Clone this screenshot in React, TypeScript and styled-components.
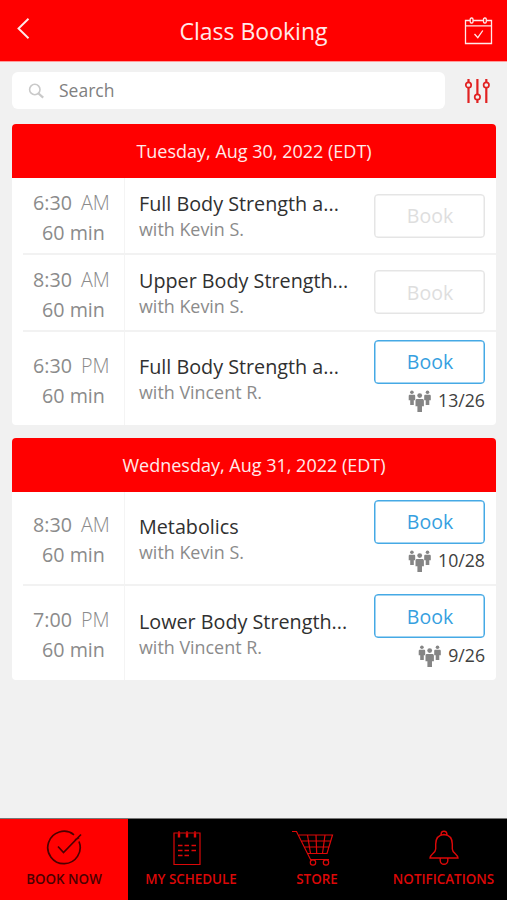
import React from "react";
import styled, { createGlobalStyle } from "styled-components";

const GlobalStyle = createGlobalStyle`
  * { box-sizing: border-box; }
  body {
    margin: 0;
    background: #f1f1f1;
    font-family: "Open Sans", "Noto Sans", sans-serif;
  }
`;

const Screen = styled.div`
  display: flex;
  flex-direction: column;
  width: 507px;
  height: 900px;
  overflow: hidden;
  background: #f1f1f1;
`;

const Header = styled.header`
  display: grid;
  grid-template-columns: 60px 1fr 60px;
  height: 62px;
  flex: none;
  background: #ff0000;
  border-bottom: 1px solid #ff9c9c;
  color: #ffe9e9;
`;

const BackButton = styled.button`
  display: flex;
  padding: 17px 0 0 16px;
  border: 0;
  background: none;
  color: inherit;
`;

const Title = styled.h1`
  margin: 0;
  font-size: 23px;
  line-height: 62px;
  font-weight: 400;
  text-align: center;
  white-space: nowrap;
`;

const CalendarButton = styled(BackButton)`
  padding: 16px 0 0 17px;
`;

const SearchRow = styled.div`
  display: flex;
  flex: none;
  height: 62px;
  padding: 10px 0 0 12px;
`;

const SearchField = styled.label`
  display: flex;
  width: 433px;
  height: 37px;
  border-radius: 6px;
  background: #fff;
`;

const SearchIcon = styled.svg`
  flex: none;
  margin: 11px 0 0 16px;
`;

const SearchInput = styled.input`
  width: 300px;
  height: 36px;
  margin-left: 14px;
  padding: 0;
  border: 0;
  outline: 0;
  background: none;
  font: 400 17.5px "Open Sans", sans-serif;
  color: #777;
  &::placeholder { color: #808080; opacity: 1; }
`;

const FilterButton = styled.button`
  display: flex;
  margin-left: 19px;
  padding: 6px 0 0;
  border: 0;
  background: none;
`;

const DayList = styled.main`
  display: flex;
  flex-direction: column;
  flex: 1;
  gap: 13px;
  padding: 0 11px 0 12px;
`;

const DayCard = styled.section`
  overflow: hidden;
  border-radius: 4px;
  background: #fff;
`;

const DayTitle = styled.h2`
  height: 54px;
  margin: 0;
  background: #ff0000;
  color: #ffeaea;
  font-size: 18px;
  font-weight: 400;
  line-height: 54px;
  text-align: center;
`;

const TimeCell = styled.div`
  display: flex;
  flex-direction: column;
  justify-content: center;
  padding: 4px 0 0 21px;
  border-right: 1px solid #f4f4f4;
  color: #8b8b8b;
  font-size: 19.7px;
  line-height: 30px;
  white-space: nowrap;
`;

const Meridiem = styled.span`
  margin-left: 9px;
  font-weight: 300;
`;

const Duration = styled.div`
  padding-left: 9px;
`;

const InfoCell = styled.div`
  display: flex;
  flex-direction: column;
  justify-content: center;
  padding: 2px 0 0 14px;
  white-space: nowrap;
`;

const ClassName = styled.div`
  color: #303030;
  font-size: 19.75px;
  line-height: 26px;
`;

const Instructor = styled.div`
  color: #8b8b8b;
  font-size: 17.9px;
  line-height: 25px;
`;

const ActionCell = styled.div`
  display: flex;
  flex-direction: column;
  justify-content: center;
  padding-right: 11px;
`;

const ClassRow = styled.article<{ $height: number; $divided: boolean }>`
  display: grid;
  grid-template-columns: 113px 1fr 122px;
  height: ${(p) => p.$height}px;
  ${(p) => p.$divided && `
    > * { border-top: 2px solid #f2f2f2; }
    > :first-child { margin-left: 11px; padding-left: 10px; }
    > :last-child { padding-bottom: 1px; }
  `}
`;

const BookButton = styled.button`
  height: 44px;
  padding: 0 0 0 1px;
  border: 1.5px solid #45a9e5;
  border-radius: 4px;
  box-shadow: inset 0 0 0 0.5px #45a9e5;
  background: #fff;
  color: #369fdf;
  font: 400 19.5px "Open Sans", sans-serif;
  &:disabled { border-color: #e5e5e5; box-shadow: inset 0 0 0 0.5px #e5e5e5; color: #dedede; }
`;

const Capacity = styled.div`
  display: flex;
  justify-content: flex-end;
  align-items: center;
  gap: 7px;
  height: 33px;
  color: #404040;
  font-size: 17.7px;
`;

const PeopleIcon = styled.svg`
  margin-top: 3px;
`;

const Nav = styled.nav`
  display: grid;
  grid-template-columns: 128px 126px 126px 127px;
  flex: none;
  height: 82px;
  background: #000;
  border-top: 1px solid #777;
`;

const NavItem = styled.button<{ $active?: boolean }>`
  display: flex;
  flex-direction: column;
  align-items: center;
  padding: 11px 0 0;
  border: 0;
  background: ${(p) => (p.$active ? "#ff0000" : "#000")};
  color: ${(p) => (p.$active ? "#4b0000" : "#dc0808")};
  font: 600 13.4px/18px "Open Sans", sans-serif;
  white-space: nowrap;
`;

const NavLabel = styled.span`
  margin-top: 4px;
`;

const OffsetIcon = styled.svg`
  margin-right: 8px;
`;

const People = () => (
  <PeopleIcon width="23" height="23" viewBox="0 0 23 23" fill="#858585">
    <circle cx="3.9" cy="2.2" r="1.8" />
    <path d="M2 4.8h3.8c1 0 1.4.5 1.4 1.3v4.1H5.8V15H2.2v-4.8H.7V6.1c0-.8.4-1.3 1.3-1.3z" />
    <circle cx="19.5" cy="2.2" r="1.8" />
    <path d="M17.6 4.8h3.8c1 0 1.4.5 1.4 1.3v4.1h-1.5V15h-3.6v-4.8h-1.5V6.1c0-.8.4-1.3 1.4-1.3z" />
    <circle cx="11.7" cy="5.6" r="2.4" />
    <path d="M9.3 9h4.8c1.2 0 1.8.6 1.8 1.7v5.6H14V22H9.4v-5.7H7.5v-5.6C7.5 9.6 8.1 9 9.3 9z" />
  </PeopleIcon>
);

const CheckIcon = () => (
  <svg width="36" height="36" viewBox="0 0 36 36" fill="none" stroke="currentColor" strokeWidth="1.7">
    <path d="M28 4.8A16.2 16.2 0 1 0 33 11.5M12 16.5l5.5 6L35 4.5M29 10l4-2.5" />
  </svg>
);

const ScheduleIcon = () => (
  <OffsetIcon width="36" height="36" viewBox="0 0 36 36" fill="none" stroke="currentColor" strokeWidth="1.2">
    <path d="M5 3h26v31.5H5zM10 1v6M18 1v6M26 1v6" />
    <path d="M8.8 3.5h2.4v4H8.8zm8 0h2.4v4h-2.4zm8 0h2.4v4h-2.4z" fill="currentColor" stroke="none" />
    <path d="M9 15.5h4.5m2 0H20m2.5 0H27M9 20.5h4.5m2 0H20m2.5 0H27M9 25.5h4.5m2 0H20" strokeWidth="1.6" />
  </OffsetIcon>
);

const StoreIcon = () => (
  <OffsetIcon width="42" height="36" viewBox="0 0 42 36" fill="none" stroke="currentColor" strokeWidth="1.2">
    <path d="M0 1.5h4.5L18.5 29.5H37M7 5h33.5l-5.5 18.5H15.5M9.8 11h29M12.8 17h24.1M15.5 5l3 18.5M24 5l.7 18.5M33 5l-2.5 18.5" />
    <circle cx="21" cy="32.5" r="2.7" />
    <circle cx="34" cy="32.5" r="2.7" />
  </OffsetIcon>
);

const BellIcon = () => (
  <svg width="36" height="36" viewBox="0 0 36 36" fill="none" stroke="currentColor" strokeWidth="1.4">
    <path d="M15 5c0-5 6-5 6 0M18 4.5c-5.5.5-8.3 4-8.3 9.5v5c0 4-5.7 5.5-5.7 9h28c0-3.5-5.7-5-5.7-9v-5c0-5.5-2.8-9-8.3-9.5zM14.2 28v2.5a3.8 3.8 0 0 0 7.6 0V28" />
  </svg>
);

interface ClassItem {
  time: string;
  meridiem: string;
  name: string;
  instructor: string;
  capacity?: string;
  height: number;
}

const days: { title: string; classes: ClassItem[] }[] = [
  {
    title: "Tuesday, Aug 30, 2022 (EDT)",
    classes: [
      { time: "6:30", meridiem: "AM", name: "Full Body Strength a...", instructor: "Kevin S.", height: 75 },
      { time: "8:30", meridiem: "AM", name: "Upper Body Strength...", instructor: "Kevin S.", height: 77 },
      { time: "6:30", meridiem: "PM", name: "Full Body Strength a...", instructor: "Vincent R.", capacity: "13/26", height: 95 },
    ],
  },
  {
    title: "Wednesday, Aug 31, 2022 (EDT)",
    classes: [
      { time: "8:30", meridiem: "AM", name: "Metabolics", instructor: "Kevin S.", capacity: "10/28", height: 92 },
      { time: "7:00", meridiem: "PM", name: "Lower Body Strength...", instructor: "Vincent R.", capacity: "9/26", height: 96 },
    ],
  },
];

export default function App() {
  return (
    <>
      <GlobalStyle />
      <Screen>
        <Header>
          <BackButton aria-label="Back">
            <svg width="14" height="23" viewBox="0 0 14 23" fill="none" stroke="currentColor" strokeWidth="1.9">
              <path d="M12.5 1.7L2.5 11.5l10 9.8" />
            </svg>
          </BackButton>
          <Title>Class Booking</Title>
          <CalendarButton aria-label="Calendar">
            <svg width="30" height="30" viewBox="0 0 30 30" fill="none" stroke="currentColor" strokeWidth="1.3">
              <path d="M6 4.5H1.5v23h26v-23H23M9 4.5h10M1.5 9.8h26M10.5 18l3.3 3.7 5-7.2" />
              <rect x="6.2" y="2" width="2.8" height="5" rx="1.2" />
              <rect x="19.5" y="2" width="2.8" height="5" rx="1.2" />
            </svg>
          </CalendarButton>
        </Header>
        <SearchRow>
          <SearchField>
            <SearchIcon width="17" height="17" viewBox="0 0 17 17" fill="none" stroke="#c9c9c9">
              <circle cx="6.8" cy="6.5" r="5.2" strokeWidth="1.6" />
              <path d="M10.5 10.5l4.7 4.2" strokeWidth="2.3" />
            </SearchIcon>
            <SearchInput placeholder="Search" />
          </SearchField>
          <FilterButton aria-label="Filters">
            <svg width="27" height="27" viewBox="0 0 27 27" fill="none" stroke="#e12222" strokeWidth="2.2">
              <path d="M4.5 1v3M4.5 10v15M13.4 1v15M13.4 22v3M22.3 1v3M22.3 10v15" />
              <g strokeWidth="1.7">
                <circle cx="4.5" cy="7" r="2.7" />
                <circle cx="13.4" cy="19" r="2.7" />
                <circle cx="22.3" cy="7" r="2.7" />
              </g>
            </svg>
          </FilterButton>
        </SearchRow>
        <DayList>
          {days.map((day) => (
            <DayCard key={day.title}>
              <DayTitle>{day.title}</DayTitle>
              {day.classes.map((item, index) => (
                <ClassRow key={item.time + item.meridiem} $height={item.height} $divided={index > 0}>
                  <TimeCell>
                    <div>{item.time}<Meridiem>{item.meridiem}</Meridiem></div>
                    <Duration>60 min</Duration>
                  </TimeCell>
                  <InfoCell>
                    <ClassName>{item.name}</ClassName>
                    <Instructor>with {item.instructor}</Instructor>
                  </InfoCell>
                  <ActionCell>
                    <BookButton disabled={!item.capacity}>Book</BookButton>
                    {item.capacity && <Capacity><People />{item.capacity}</Capacity>}
                  </ActionCell>
                </ClassRow>
              ))}
            </DayCard>
          ))}
        </DayList>
        <Nav>
          <NavItem $active><CheckIcon /><NavLabel>BOOK NOW</NavLabel></NavItem>
          <NavItem><ScheduleIcon /><NavLabel>MY SCHEDULE</NavLabel></NavItem>
          <NavItem><StoreIcon /><NavLabel>STORE</NavLabel></NavItem>
          <NavItem><BellIcon /><NavLabel>NOTIFICATIONS</NavLabel></NavItem>
        </Nav>
      </Screen>
    </>
  );
}
